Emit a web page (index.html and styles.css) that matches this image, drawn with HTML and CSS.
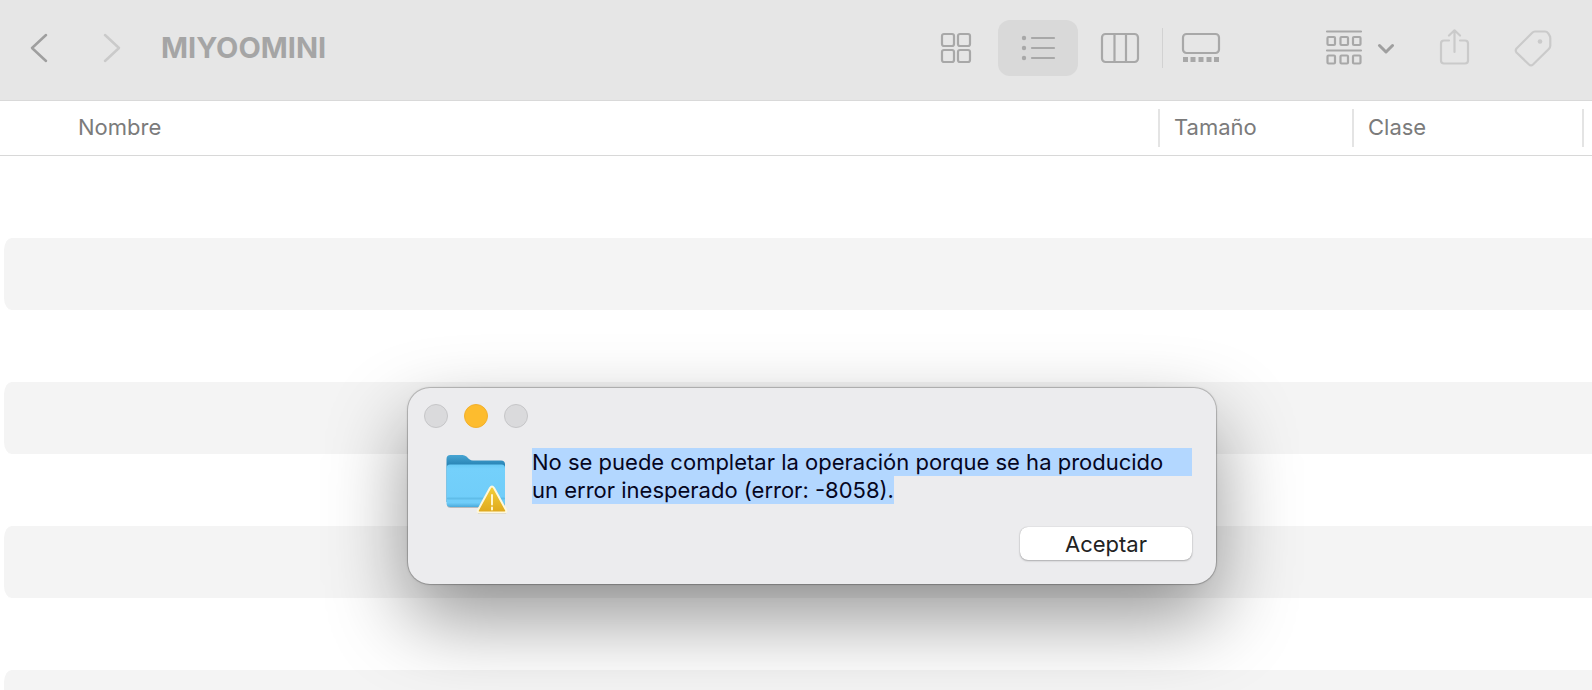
FILE: index.html
```html
<!DOCTYPE html>
<html lang="es">
<head>
<meta charset="utf-8">
<title>MIYOOMINI</title>
<link rel="stylesheet" href="styles.css">
</head>
<body>
<header class="toolbar">
  <nav class="history">
    <button class="icon-btn" aria-label="Atrás"><svg width="18" height="30" viewBox="0 0 18 30"><path d="M16 2 2 15l14 13"/></svg></button>
    <button class="icon-btn faint" aria-label="Adelante"><svg width="18" height="30" viewBox="0 0 18 30"><path d="M2 2 16 15 2 28"/></svg></button>
  </nav>
  <h1 class="title">MIYOOMINI</h1>
  <div class="views">
    <button class="view-btn" aria-label="Iconos"><svg width="32" height="32" viewBox="0 0 32 32"><rect x="2" y="2" width="12" height="12" rx="2"/><rect x="18" y="2" width="12" height="12" rx="2"/><rect x="2" y="18" width="12" height="12" rx="2"/><rect x="18" y="18" width="12" height="12" rx="2"/></svg></button>
    <button class="view-btn selected" aria-label="Lista"><svg width="36" height="28" viewBox="0 0 36 28"><path d="M12 4h22M12 14h22M12 24h22"/><g class="solid"><circle cx="4" cy="4" r="2.200"/><circle cx="4" cy="14" r="2.200"/><circle cx="4" cy="24" r="2.200"/></g></svg></button>
    <button class="view-btn" aria-label="Columnas"><svg width="40" height="32" viewBox="0 0 40 32"><rect x="2" y="2" width="36" height="28" rx="3.500"/><path d="M14.500 2v28M26 2v28"/></svg></button>
    <button class="view-btn divided" aria-label="Galería"><svg width="40" height="32" viewBox="0 0 40 32"><rect x="2" y="2" width="36" height="19" rx="3.500"/><path class="bars" d="M2 27.500h5M9.500 27.500h5M17.500 27.500h5M25.500 27.500h5M33 27.500h5"/></svg></button>
  </div>
  <div class="actions">
    <button class="icon-btn" aria-label="Agrupar"><svg width="70" height="38" viewBox="0 0 70 38"><path class="thin" d="M3 2.500h34M3 21.500h34"/><g><rect x="3.500" y="8" width="7.500" height="8" rx="1"/><rect x="16.500" y="8" width="7.500" height="8" rx="1"/><rect x="29" y="8" width="7.500" height="8" rx="1"/><rect x="3.500" y="26.500" width="7.500" height="8" rx="1"/><rect x="16.500" y="26.500" width="7.500" height="8" rx="1"/><rect x="29" y="26.500" width="7.500" height="8" rx="1"/></g><path class="bold" d="m55.500 16.500 6.500 6.500 6.500-6.500"/></svg></button>
    <button class="icon-btn faint" aria-label="Compartir"><svg width="32" height="38" viewBox="0 0 32 38"><path d="M11 11.500H6a3 3 0 0 0-3 3v17a3 3 0 0 0 3 3h21a3 3 0 0 0 3-3v-17a3 3 0 0 0-3-3h-5M16.500 23V1.500M11 6.500 16.500 1.300 22 6.500"/></svg></button>
    <button class="icon-btn faint" aria-label="Etiquetas"><svg width="38" height="38" viewBox="0 0 38 38"><path d="M21 2.500h10q2 0 3.200 1.800l1.300 2.200q.8 1 .8 3v7q0 2-1.500 3.500L19 35.500q-2 1.800-4 0L2.500 23.500q-1.500-2 0-4L18 4q1.300-1.500 3-1.500z"/><circle class="hole" cx="26" cy="12.500" r="2.300"/></svg></button>
  </div>
</header>
<main class="files">
  <table class="list">
    <thead>
      <tr><th class="name"><span>Nombre</span></th><th class="size"><span class="sep">Tamaño</span></th><th class="kind"><span class="sep">Clase</span></th><th class="end"><span class="sep"></span></th></tr>
    </thead>
    <tbody>
      <tr class="lead"><td colspan="4"></td></tr>
      <tr><td colspan="4"></td></tr>
      <tr class="odd"><td colspan="4"></td></tr>
      <tr><td colspan="4"></td></tr>
      <tr class="odd"><td colspan="4"></td></tr>
      <tr><td colspan="4"></td></tr>
      <tr class="odd"><td colspan="4"></td></tr>
      <tr><td colspan="4"></td></tr>
      <tr class="odd"><td colspan="4"></td></tr>
    </tbody>
  </table>
</main>
<section class="dialog" role="alertdialog" aria-labelledby="message">
  <div class="lights">
    <button class="light" aria-label="Cerrar"></button>
    <button class="light amber" aria-label="Minimizar"></button>
    <button class="light" aria-label="Ampliar"></button>
  </div>
  <div class="content">
    <svg class="folder" width="64" height="64" viewBox="0 0 64 64" aria-hidden="true">
      <defs>
        <linearGradient id="back" x1="0" y1="0" x2="0" y2="1"><stop offset="0" stop-color="#47a5d3"/><stop offset=".2" stop-color="#2b86b7"/></linearGradient>
        <linearGradient id="front" x1="0" y1="0" x2="0" y2="1"><stop offset="0" stop-color="#68c9f5"/><stop offset=".1" stop-color="#74d0fb"/><stop offset=".9" stop-color="#70cdf9"/><stop offset="1" stop-color="#4aa9da"/></linearGradient>
        <linearGradient id="warn" x1="0" y1="0" x2="0" y2="1"><stop offset="0" stop-color="#f3d03a"/><stop offset="1" stop-color="#dfa81c"/></linearGradient>
      </defs>
      <path d="M3 8q0-4 4-4h12q2 0 4 2l2 2q2 1.500 4 1.500h28q4 0 4 4V54q0 2-4 2H7q-4 0-4-3z" fill="#888" opacity=".5"/>
      <path d="M2.500 7q0-4 4-4h12q2 0 4 1.500L25 7q2 1.500 4 1.500h28q4 0 4 4V50H2.500z" fill="url(#back)"/>
      <path d="M2.500 16q0-3.500 3.500-3.500h51.500q3.500 0 3.500 3.500v35q0 4-4 4H6.500q-4 0-4-4z" fill="url(#front)"/>
      <path d="M4 46.500h56" stroke="#60bde9"/>
      <path d="M46 36q2-3 4 0l12 22.500q1 2.500-1.500 2.500h-25q-2.500 0-1.500-2.500z" fill="#aaa" opacity=".6" transform="translate(0 1)"/>
      <path d="M46 36q2-3 4 0l12 22q1 2.500-1.500 2.500h-25q-2.500 0-1.500-2.500z" fill="url(#warn)" stroke="#fff8dc" stroke-width="2"/>
      <path d="M48 43v9.500M48 55.500v2" stroke="#fff6cf" stroke-width="2"/>
    </svg>
    <p class="message" id="message"><span class="full">No se puede completar la operación porque se ha producido</span> <span class="part">un error inesperado (error: -8058).</span></p>
  </div>
  <button class="accept">Aceptar</button>
</section>
</body>
</html>
```
FILE: styles.css
```css
* {
  box-sizing: border-box;
}

body {
  margin: 0;
  height: 100vh;
  display: flex;
  flex-direction: column;
  overflow: hidden;
  position: relative;
  background: #fff;
  font: 22px/28px Inter, "Liberation Sans", sans-serif;
}

button {
  border: 0;
  padding: 0;
  background: none;
  font: inherit;
}

svg {
  display: block;
  fill: none;
  stroke: #a8a8a8;
  stroke-width: 2.2;
  stroke-linecap: round;
  stroke-linejoin: round;
}

.toolbar {
  flex: none;
  height: 101px;
  padding: 0 40px 4px 30px;
  display: flex;
  align-items: center;
  background: #e6e6e6;
  border-bottom: 1px solid #d9d9d9;
}

.history {
  display: flex;
  gap: 55px;
}

.history svg {
  stroke: #9f9f9f;
  stroke-width: 2.5;
}

.faint svg,
.history .faint svg {
  stroke: #cacaca;
}

.title {
  margin: 0 auto 0 40px;
  color: #a5a5a5;
  font-size: 29px;
  line-height: 36px;
  font-weight: 700;
}

.views {
  display: flex;
  gap: 2px;
  margin-right: 82px;
}

.view-btn {
  width: 80px;
  height: 56px;
  display: flex;
  align-items: center;
  justify-content: center;
  border-radius: 12px;
}

.selected {
  background: #d9d9d9;
}

.divided::before {
  content: "";
  width: 1px;
  height: 40px;
  margin-right: 18px;
  background: #d2d2d2;
}

.divided {
  justify-content: flex-start;
  border-radius: 0;
}

.solid,
.hole {
  fill: #a8a8a8;
  stroke: none;
}

.hole {
  fill: #cacaca;
}

.bars {
  stroke-width: 5;
  stroke-linecap: butt;
}

.bold {
  stroke: #9f9f9f;
  stroke-width: 3;
}

.actions {
  display: flex;
  align-items: center;
  gap: 44px;
}

.files {
  flex: 1;
  overflow: hidden;
}

.list {
  width: 100%;
  table-layout: fixed;
  border-spacing: 0;
}

.list th {
  height: 55px;
  padding: 0 0 1px;
  border-bottom: 1px solid #d8d8d8;
  color: #7b7b7b;
  font-weight: 400;
  text-align: left;
}

.list span {
  display: block;
  height: 38px;
  line-height: 36px;
}

.name span {
  padding-left: 78px;
}

.size {
  width: 194px;
}

.kind {
  width: 230px;
}

.end {
  width: 10px;
}

.sep {
  padding-left: 14px;
  border-left: 2px solid #e4e4e4;
}

.list td {
  height: 72px;
  padding: 0;
}

.lead td {
  height: 10px;
}

.odd td {
  border-left: 4px solid #fff;
  border-radius: 12px 0 0 12px;
  background: #f4f4f4;
}

.dialog {
  position: absolute;
  left: 408px;
  top: 388px;
  width: 808px;
  padding: 16px 24px 24px 16px;
  border-radius: 22px;
  background: #ececee;
  box-shadow: 0 0 0 1px rgba(0, 0, 0, 0.16), 0 0 3px rgba(0, 0, 0, 0.2), 0 34px 80px rgba(0, 0, 0, 0.42);
}

.lights {
  display: flex;
  gap: 16px;
}

.light {
  width: 24px;
  height: 24px;
  border-radius: 50%;
  background: #dadadc;
  border: 1px solid #c6c6c8;
}

.amber {
  background: #fdbc2e;
  border-color: #f2b02c;
}

.content {
  display: flex;
  gap: 24px;
  margin: 20px 0 11px 20px;
}

.folder {
  flex: none;
  margin-top: 4px;
  stroke: none;
}

.message {
  flex: 1;
  margin: 0;
  color: #06061e;
}

.full,
.part {
  display: block;
  background: #b3d7ff;
}

.part {
  width: fit-content;
}

.accept {
  display: block;
  width: 172px;
  height: 33px;
  margin-left: auto;
  border-radius: 8px;
  background: #fff;
  color: #222;
  box-shadow: 0 0 1px rgba(0, 0, 0, 0.3), 0 1px 2px rgba(0, 0, 0, 0.25);
}
```
